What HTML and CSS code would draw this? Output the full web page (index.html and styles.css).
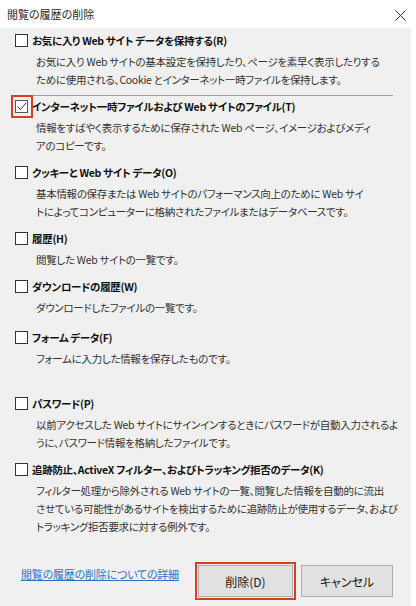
FILE: index.html
```html
<!DOCTYPE html>
<html lang="ja">
<head>
<meta charset="utf-8">
<title>閲覧の履歴の削除</title>
<link rel="stylesheet" href="styles.css">
</head>
<body>
<div class="window">
  <div class="titlebar">
    <span class="title">閲覧の履歴の削除</span>
    <svg class="close" width="11" height="11" viewBox="0 0 11 11"><path d="M0.5 0.5 L10.5 10.5 M10.5 0.5 L0.5 10.5" stroke="#333" stroke-width="1" fill="none"/></svg>
  </div>
  <div class="content">
    <div class="option first">
      <div class="label-row"><span class="cb"></span><span class="label">お気に入り Web サイト データを保持する(R)</span></div>
      <p class="desc">お気に入り Web サイトの基本設定を保持したり、ページを素早く表示したりする<br>ために使用される、Cookie とインターネット一時ファイルを保持します。</p>
    </div>
    <div class="separator"></div>
    <div class="option sep-after">
      <div class="label-row"><span class="cb checked focused"><svg width="11" height="11" viewBox="0 0 11 11"><path d="M1.5 5.5 L4.5 8.5 L10 2" stroke="#333" stroke-width="1" fill="none"/></svg></span><span class="label">インターネット一時ファイルおよび Web サイトのファイル(T)</span></div>
      <p class="desc">情報をすばやく表示するために保存された Web ページ、イメージおよびメディ<br>アのコピーです。</p>
    </div>
    <div class="option">
      <div class="label-row"><span class="cb"></span><span class="label">クッキーと Web サイト データ(O)</span></div>
      <p class="desc">基本情報の保存または Web サイトのパフォーマンス向上のために Web サイ<br>トによってコンピューターに格納されたファイルまたはデータベースです。</p>
    </div>
    <div class="option">
      <div class="label-row"><span class="cb"></span><span class="label">履歴(H)</span></div>
      <p class="desc">閲覧した Web サイトの一覧です。</p>
    </div>
    <div class="option">
      <div class="label-row"><span class="cb"></span><span class="label">ダウンロードの履歴(W)</span></div>
      <p class="desc">ダウンロードしたファイルの一覧です。</p>
    </div>
    <div class="option roomy">
      <div class="label-row"><span class="cb"></span><span class="label">フォーム データ(F)</span></div>
      <p class="desc">フォームに入力した情報を保存したものです。</p>
    </div>
    <div class="option wide-gap">
      <div class="label-row"><span class="cb"></span><span class="label">パスワード(P)</span></div>
      <p class="desc">以前アクセスした Web サイトにサインインするときにパスワードが自動入力されるよ<br>うに、パスワード情報を格納したファイルです。</p>
    </div>
    <div class="option">
      <div class="label-row"><span class="cb"></span><span class="label">追跡防止、ActiveX フィルター、およびトラッキング拒否のデータ(K)</span></div>
      <p class="desc">フィルター処理から除外される Web サイトの一覧、閲覧した情報を自動的に流出<br>させている可能性があるサイトを検出するために追跡防止が使用するデータ、および<br>トラッキング拒否要求に対する例外です。</p>
    </div>
    <div class="footer">
      <a class="link" href="#">閲覧の履歴の削除についての詳細</a>
      <div class="buttons">
        <button class="btn primary">削除(D)</button>
        <button class="btn">キャンセル</button>
      </div>
    </div>
  </div>
</div>
</body>
</html>
```

FILE: styles.css
```css
html, body {
  margin: 0;
  padding: 0;
  background: #ffffff;
}
body {
  font-family: "Noto Sans CJK JP", "Noto Sans", sans-serif;
  font-feature-settings: "palt";
  font-size: 10.5px;
  color: #1a1a1a;
}
.window {
  width: 416px;
  height: 606px;
  display: flex;
  flex-direction: column;
  background: #ffffff;
}
.titlebar {
  height: 28px;
  flex: none;
  display: flex;
  align-items: center;
  justify-content: space-between;
  padding: 0 10px 0 7px;
  box-sizing: border-box;
}
.title {
  font-size: 11px;
  color: #2b2b2b;
}
.close {
  display: block;
  margin-top: 2px;
}
.content {
  flex: 1;
  background: #f0f0f0;
  margin-right: 5px;
  display: flex;
  flex-direction: column;
  padding: 0 18px 9px 15px;
}
.option {
  margin-top: 9px;
}
.option.first {
  margin-top: 4px;
}
.option.sep-after {
  margin-top: 2px;
}
.option.roomy {
  margin-top: 12px;
}
.option.wide-gap {
  margin-top: 27px;
}
.separator {
  height: 1px;
  background: #a0a0a0;
  margin: 6px 0 0 17px;
  width: 361px;
}
.label-row {
  height: 16px;
  display: flex;
  align-items: center;
}
.cb {
  position: relative;
  width: 13px;
  height: 13px;
  box-sizing: border-box;
  border: 1px solid #333333;
  background: #ffffff;
  flex: none;
  display: flex;
  align-items: center;
  justify-content: center;
}
.cb.checked {
  border-color: #555555;
}
.cb svg {
  display: block;
}
.cb.focused::after {
  content: "";
  position: absolute;
  left: -5px;
  top: -6px;
  width: 22px;
  height: 23px;
  box-sizing: border-box;
  border: 2px solid #d9401f;
}
.label {
  margin-left: 4px;
  font-weight: bold;
  color: #111111;
  white-space: nowrap;
  letter-spacing: -0.3px;
}
.desc {
  margin: 5px 0 0 21px;
  line-height: 18px;
  color: #333333;
  white-space: nowrap;
  letter-spacing: -0.3px;
}
.footer {
  margin-top: auto;
  display: flex;
  align-items: flex-start;
  justify-content: space-between;
  padding-left: 6px;
}
.link {
  color: #2f74c8;
  text-decoration: underline;
  margin-top: 1px;
  font-size: 11px;
  letter-spacing: -0.2px;
}
.buttons {
  display: flex;
  gap: 8px;
}
.btn {
  height: 32px;
  width: 92px;
  background: #e1e1e1;
  border: 1px solid #adadad;
  font-family: "Noto Sans CJK JP", "Noto Sans", sans-serif;
  font-feature-settings: "palt";
  font-size: 12px;
  color: #1a1a1a;
  padding: 0;
}
.btn.primary {
  width: 95px;
  outline: 2px solid #d9401f;
  outline-offset: 1px;
}
```
